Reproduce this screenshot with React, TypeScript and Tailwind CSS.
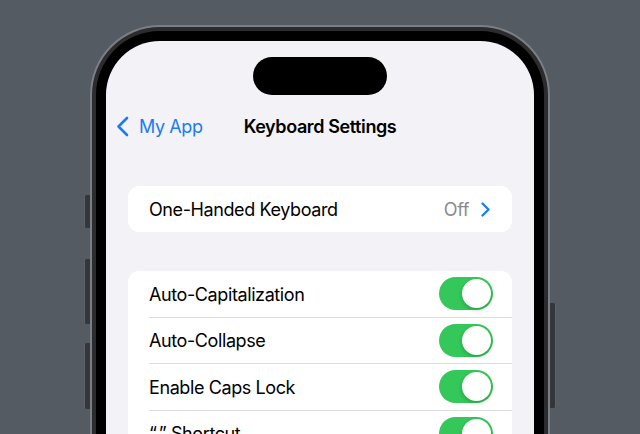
import React from "react";

const font = { fontFamily: "Inter, 'Noto Sans', sans-serif" };

const Toggle = () => (
  <div className="relative w-[54px] h-[33px] rounded-full bg-[#34c759] shrink-0">
    <div className="absolute right-[2px] top-[2px] w-[29px] h-[29px] rounded-full bg-white shadow-[0_2px_4px_rgba(0,0,0,0.2)]" />
  </div>
);

const ToggleRow = ({ label, last }: { label: string; last?: boolean }) => (
  <div className="pl-[21px]">
    <div className="h-[45.5px] flex items-center justify-between pr-[19px]">
      <span className="text-[18px] text-black tracking-[-0.4px] pt-px">{label}</span>
      <Toggle />
    </div>
    {!last && <div className="h-px bg-[#dcdce0]" />}
  </div>
);

const App = () => {
  const toggles = ["Auto-Capitalization", "Auto-Collapse", "Enable Caps Lock", "\u201C.\u201D Shortcut"];

  return (
    <div className="w-[640px] h-[434px] bg-[#555b63] overflow-hidden" style={font}>
      <div className="relative ml-[90px] mt-[25px] w-[460px] h-[520px]">
        {/* side buttons */}
        <div className="absolute left-[-6px] top-[170px] w-[6px] h-[33px] rounded-l-[2px] bg-[#33363b] border-l border-[#5e6268]" />
        <div className="absolute left-[-6px] top-[234px] w-[6px] h-[65px] rounded-l-[2px] bg-[#33363b] border-l border-[#5e6268]" />
        <div className="absolute left-[-6px] top-[318px] w-[6px] h-[66px] rounded-l-[2px] bg-[#33363b] border-l border-[#5e6268]" />
        <div className="absolute right-[-6px] top-[278px] w-[6px] h-[105px] rounded-r-[2px] bg-[#33363b] border-r border-[#5e6268]" />

        {/* frame */}
        <div className="h-full p-[2px] rounded-[70px] bg-[#7b7e83]">
          <div className="h-full p-[4px] rounded-[68px] bg-[#2c2c2e]">
            <div className="h-full p-[10px] rounded-[64px] bg-black">
              <div className="h-full rounded-[54px] bg-[#f2f2f7] overflow-hidden">
                {/* dynamic island */}
                <div className="flex justify-center pt-[16px]">
                  <div className="w-[134px] h-[38px] rounded-full bg-black" />
                </div>

                {/* nav bar */}
                <div className="mt-[9px] h-[44px] grid grid-cols-[1fr_auto_1fr] items-center px-[10px]">
                  <div className="flex items-center gap-[10px] text-[#1a7cf2]">
                    <svg width="13" height="21" viewBox="0 0 13 21" fill="none">
                      <path d="M11 2 L2.5 10.5 L11 19" stroke="currentColor" strokeWidth="2.6" strokeLinecap="round" strokeLinejoin="round" />
                    </svg>
                    <span className="text-[18px] tracking-[-0.4px]">My App</span>
                  </div>
                  <div className="text-[18px] font-semibold text-black tracking-[-0.4px]">Keyboard Settings</div>
                  <div />
                </div>

                {/* one-handed keyboard */}
                <div className="mx-[22px] mt-[38px] h-[46px] rounded-[11px] bg-white flex items-center justify-between pl-[21px] pr-[22px]">
                  <span className="text-[18px] text-black tracking-[-0.4px] pt-px">One-Handed Keyboard</span>
                  <div className="flex items-center gap-[12px]">
                    <span className="text-[18px] text-[#8a8a8e] tracking-[-0.4px] pt-px">Off</span>
                    <svg width="9" height="15" viewBox="0 0 9 15" fill="none">
                      <path d="M1.5 1.5 L7.5 7.5 L1.5 13.5" stroke="#1a7cf2" strokeWidth="2.3" strokeLinecap="round" strokeLinejoin="round" />
                    </svg>
                  </div>
                </div>

                {/* toggles */}
                <div className="mx-[22px] mt-[39px] rounded-[11px] bg-white overflow-hidden">
                  {toggles.map((t, i) => (
                    <ToggleRow key={t} label={t} last={i === toggles.length - 1} />
                  ))}
                </div>
              </div>
            </div>
          </div>
        </div>
      </div>
    </div>
  );
};

export default App;
